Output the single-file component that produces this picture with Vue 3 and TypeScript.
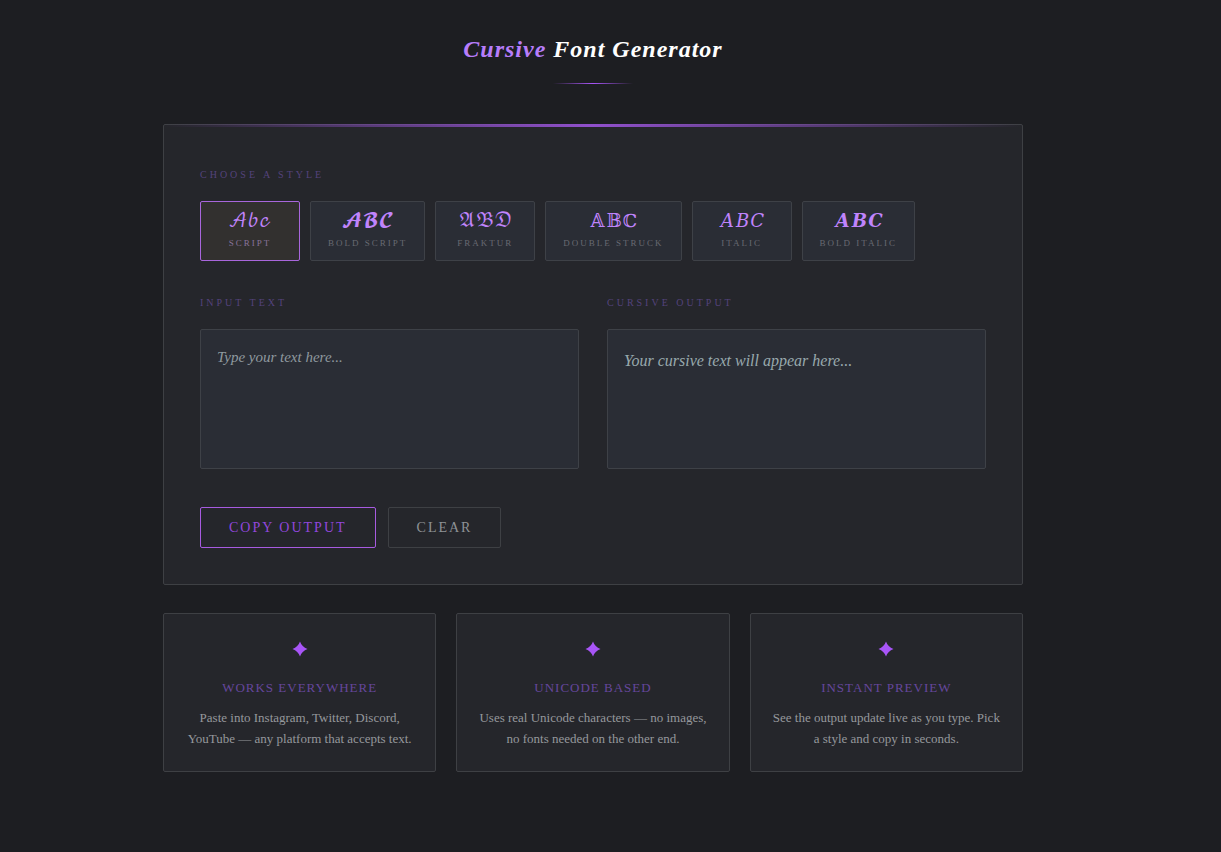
<script setup lang="ts">
import { computed, ref } from 'vue'

interface FontStyle {
  id: string
  label: string
  sample: string
  upper: number
  lower: number
}

const styles: FontStyle[] = [
  { id: 'script', label: 'Script', sample: '𝒜𝒷𝒸', upper: 0x1d49c, lower: 0x1d4b6 },
  { id: 'bold-script', label: 'Bold Script', sample: '𝓐𝓑𝓒', upper: 0x1d4d0, lower: 0x1d4ea },
  { id: 'fraktur', label: 'Fraktur', sample: '𝔄𝔅𝔇', upper: 0x1d504, lower: 0x1d51e },
  { id: 'double', label: 'Double Struck', sample: '𝔸𝔹ℂ', upper: 0x1d538, lower: 0x1d552 },
  { id: 'italic', label: 'Italic', sample: '𝐴𝐵𝐶', upper: 0x1d434, lower: 0x1d44e },
  { id: 'bold-italic', label: 'Bold Italic', sample: '𝑨𝑩𝑪', upper: 0x1d468, lower: 0x1d482 },
]

// Letters that live outside the contiguous mathematical blocks.
const exceptions: Record<string, Record<string, string>> = {
  script: { B: 'ℬ', E: 'ℰ', F: 'ℱ', H: 'ℋ', I: 'ℐ', L: 'ℒ', M: 'ℳ', R: 'ℛ', e: 'ℯ', g: 'ℊ', o: 'ℴ' },
  fraktur: { C: 'ℭ', H: 'ℌ', I: 'ℑ', R: 'ℜ', Z: 'ℨ' },
  double: { C: 'ℂ', H: 'ℍ', N: 'ℕ', P: 'ℙ', Q: 'ℚ', R: 'ℝ', Z: 'ℤ' },
  italic: { h: 'ℎ' },
}

const features = [
  { title: 'Works Everywhere', lines: ['Paste into Instagram, Twitter, Discord,', 'YouTube — any platform that accepts text.'] },
  { title: 'Unicode Based', lines: ['Uses real Unicode characters — no images,', 'no fonts needed on the other end.'] },
  { title: 'Instant Preview', lines: ['See the output update live as you type. Pick', 'a style and copy in seconds.'] },
]

const current = ref('script')
const input = ref('')

const output = computed(() => {
  const style = styles.find((s) => s.id === current.value) ?? styles[0]
  return [...input.value]
    .map((ch) => {
      const special = exceptions[style.id]?.[ch]
      if (special) return special
      const code = ch.charCodeAt(0)
      if (/[A-Z]/.test(ch)) return String.fromCodePoint(style.upper + code - 65)
      if (/[a-z]/.test(ch)) return String.fromCodePoint(style.lower + code - 97)
      return ch
    })
    .join('')
})

function copyOutput() {
  navigator.clipboard?.writeText(output.value)
}
</script>

<template>
  <div class="shell">
    <main class="page">
      <header class="heading">
        <h1><span>Cursive</span> Font Generator</h1>
        <div class="rule"></div>
      </header>

      <section class="panel">
        <h2 class="caption">Choose a Style</h2>
        <div class="styles">
          <button
            v-for="s in styles"
            :key="s.id"
            type="button"
            class="style"
            :class="{ active: s.id === current }"
            :aria-pressed="s.id === current"
            @click="current = s.id"
          >
            <span class="sample">{{ s.sample }}</span>
            <span class="name">{{ s.label }}</span>
          </button>
        </div>

        <div class="fields">
          <div class="field">
            <label class="caption" for="source">Input Text</label>
            <textarea id="source" v-model="input" placeholder="Type your text here..."></textarea>
          </div>
          <div class="field">
            <label class="caption" for="result">Cursive Output</label>
            <textarea id="result" class="result" readonly :value="output" placeholder="Your cursive text will appear here..."></textarea>
          </div>
        </div>

        <div class="actions">
          <button type="button" class="action primary" @click="copyOutput">Copy Output</button>
          <button type="button" class="action" @click="input = ''">Clear</button>
        </div>
      </section>

      <section class="features">
        <article v-for="f in features" :key="f.title" class="feature">
          <svg class="star" viewBox="0 0 16 16" aria-hidden="true">
            <path d="M8 0.5C9.2 4 11.8 6.8 15.5 8C11.8 9.2 9.2 12 8 15.5C6.8 12 4.2 9.2 0.5 8C4.2 6.8 6.8 4 8 0.5Z" />
          </svg>
          <h3>{{ f.title }}</h3>
          <p><template v-for="(line, i) in f.lines" :key="i"><br v-if="i > 0" />{{ line }}</template></p>
        </article>
      </section>
    </main>
  </div>
</template>

<style>
body {
  margin: 0;
  background: #1d1e22;
}
</style>

<style scoped>
.shell {
  padding: 31px 35px 80px 0;
}

.page {
  max-width: 860px;
  margin: 0 auto;
  font-family: "Liberation Serif", "Times New Roman", serif;
  color: #95989c;
}

.heading {
  display: flex;
  flex-direction: column;
  align-items: center;
}

h1 {
  margin: 0;
  font-size: 24px;
  line-height: 36px;
  font-style: italic;
  font-weight: 700;
  letter-spacing: 1px;
  color: #fff;
}

h1 span {
  color: #b77dfb;
}

.rule {
  width: 80px;
  height: 1px;
  margin: 16px 0 40px;
  background: linear-gradient(90deg, #a855f700, #a855f7, #a855f700);
}

.panel {
  position: relative;
  box-sizing: border-box;
  padding: 42px 36px 36px;
  border: 1px solid #3e4044;
  border-radius: 2px;
  background: #25262b;
}

.panel::before {
  content: "";
  position: absolute;
  top: -1px;
  left: 0;
  right: 0;
  height: 3px;
  background: linear-gradient(90deg, transparent, #9050cc, transparent);
}

.caption {
  display: block;
  margin: 0;
  font-size: 10px;
  line-height: 16px;
  font-weight: 400;
  letter-spacing: 3px;
  text-transform: uppercase;
  color: #54437c;
}

.styles {
  display: flex;
  flex-wrap: wrap;
  gap: 10px;
  margin-top: 18px;
}

.style {
  display: flex;
  flex-direction: column;
  align-items: center;
  box-sizing: border-box;
  min-width: 100px;
  height: 60px;
  padding: 5px 17px;
  border: 1px solid #3e4147;
  border-radius: 2px;
  background: #2a2d35;
  font-family: inherit;
  cursor: pointer;
}

.style.active {
  border-color: #a866dc;
  background: #32302f;
}

.sample {
  font-family: "Liberation Serif", "DejaVu Math TeX Gyre", "DejaVu Serif", serif;
  font-size: 18px;
  line-height: 28px;
  color: #c084fc;
}

.name {
  font-size: 9px;
  line-height: 16px;
  letter-spacing: 2px;
  text-transform: uppercase;
  white-space: nowrap;
  color: #686a72;
}

.active .name {
  color: #88739b;
}

.fields {
  display: grid;
  grid-template-columns: 1fr 1fr;
  gap: 28px;
  margin-top: 34px;
}

textarea {
  display: block;
  box-sizing: border-box;
  width: 100%;
  height: 140px;
  margin: 18px 0 0;
  padding: 14px 16px;
  border: 1px solid #3e4147;
  border-radius: 2px;
  outline: none;
  resize: none;
  background: #2a2d35;
  font-family: inherit;
  font-size: 15px;
  line-height: 26px;
  color: #d8dadd;
}

textarea::placeholder {
  font-style: italic;
  color: #8f999f;
  opacity: 1;
}

.result {
  padding-top: 18px;
  font-size: 16px;
}

.result::placeholder {
  color: #98a9ad;
}

.actions {
  display: flex;
  gap: 12px;
  margin-top: 38px;
}

.action {
  height: 41px;
  padding: 0 28px;
  border: 1px solid #3e4044;
  border-radius: 2px;
  background: transparent;
  font-family: inherit;
  font-size: 14px;
  letter-spacing: 2px;
  text-transform: uppercase;
  color: #8e9296;
  cursor: pointer;
}

.action.primary {
  border-color: #a75be0;
  color: #9147dc;
}

.features {
  display: grid;
  grid-template-columns: repeat(3, 1fr);
  gap: 20px;
  margin-top: 28px;
}

.feature {
  box-sizing: border-box;
  padding: 27px 12px 22px;
  border: 1px solid #3e4044;
  border-radius: 2px;
  background: #25262b;
  text-align: center;
}

.star {
  display: block;
  width: 16px;
  height: 16px;
  margin: 0 auto 21px;
  fill: #a855f7;
}

h3 {
  margin: 0 0 9px;
  font-size: 13px;
  line-height: 20px;
  font-weight: 400;
  letter-spacing: 1px;
  text-transform: uppercase;
  color: #65469d;
}

p {
  margin: 0;
  font-size: 13px;
  line-height: 21px;
  white-space: nowrap;
}

@media (max-width: 900px) {
  .shell {
    padding: 31px 16px;
  }

  .fields,
  .features {
    grid-template-columns: 1fr;
  }
}
</style>
